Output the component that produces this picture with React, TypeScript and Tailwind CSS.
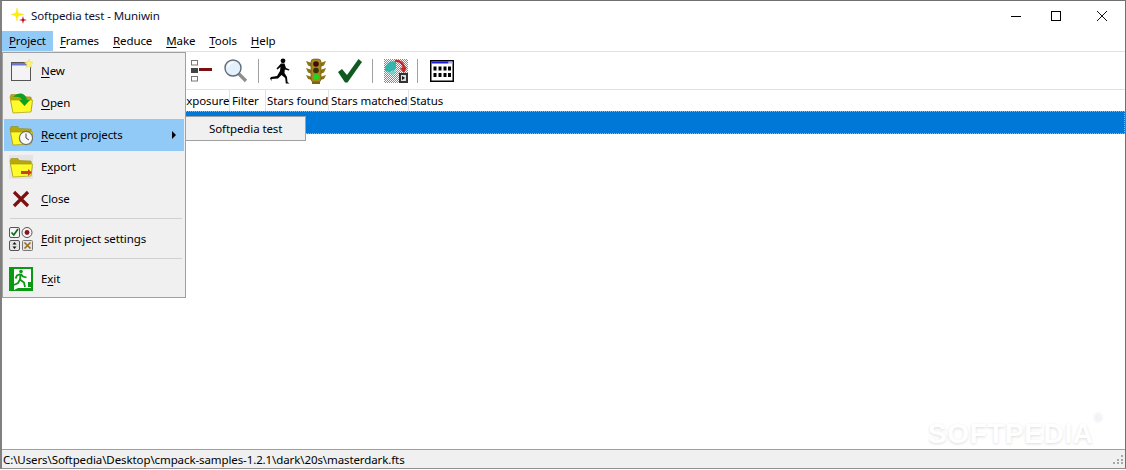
import React from 'react';

function AppIcon() {
  return (
    <svg width="18" height="18" viewBox="0 0 18 18" className="shrink-0">
      <path d="M7 1 L8.3 6 L14 7.5 L8.3 9 L7 14 L5.7 9 L1 7.5 L5.7 6 Z" fill="#ffee00" stroke="#f2e64a" strokeWidth="0.5" />
      <path d="M13 9 L13.8 12.2 L17 13 L13.8 13.8 L13 17 L12.2 13.8 L9 13 L12.2 12.2 Z" fill="#b8001c" />
    </svg>
  );
}

function NewIcon() {
  return (
    <svg width="24" height="24" viewBox="0 0 24 24">
      <rect x="2.5" y="3.5" width="19" height="18" fill="#f4f4f4" stroke="#555" />
      <rect x="3" y="4" width="18" height="2.5" fill="#6f78d8" />
      <path d="M20 0 L21.2 3 L24 3.4 L22 5.6 L22.8 8.8 L20 7.2 L17.2 8.8 L18 5.6 L15.6 3.4 L18.8 3 Z" fill="#fff27a" stroke="#e6d75a" strokeWidth="0.5" />
    </svg>
  );
}

function Folder({ children, bg }: { children?: React.ReactNode; bg?: string }) {
  return (
    <svg width="24" height="24" viewBox="0 0 24 24">
      {bg && <rect width="24" height="24" fill={bg} />}
      <path d="M1 6 L2 3.5 L9 3.5 L10 5.5 L22 6 L23 12 L22 20 L4 21 Z" fill="#b8a80c" stroke="#8d8410" strokeWidth="0.5" />
      <path d="M1.5 9 L23.5 9 L22 21 L4 22 Z" fill="#fffc2a" stroke="#a89c10" strokeWidth="0.7" />
      {children}
    </svg>
  );
}

function ClockOverlay() {
  return (
    <g>
      <circle cx="17" cy="15" r="6.6" fill="#f8f8f8" stroke="#707070" strokeWidth="1.2" />
      <path d="M17 10.5 L17 15 L20 17" fill="none" stroke="#444" strokeWidth="1" />
    </g>
  );
}

function XIcon() {
  return (
    <svg width="18" height="18" viewBox="0 0 18 18">
      <path d="M2 2 L16 16 M16 2 L2 16" stroke="#7c1010" strokeWidth="3.2" />
    </svg>
  );
}

function SettingsIcon() {
  return (
    <svg width="24" height="24" viewBox="0 0 24 24">
      <rect x="0.5" y="0.5" width="10" height="10" rx="1.5" fill="#f5f5f5" stroke="#555" />
      <path d="M2.5 5.5 L4.8 8 L9 2" fill="none" stroke="#0d6a1b" strokeWidth="1.7" />
      <circle cx="18" cy="5.5" r="5" fill="#f5f5f5" stroke="#555" />
      <circle cx="18" cy="5.5" r="2.4" fill="#8c1220" />
      <rect x="0.5" y="13.5" width="10" height="10" rx="1.5" fill="#e4e4e4" stroke="#555" />
      <path d="M5.5 15 L7.5 17.5 L3.5 17.5 Z M5.5 22 L7.5 19.5 L3.5 19.5 Z" fill="#111" />
      <rect x="13.5" y="13.5" width="10" height="10" rx="1" fill="#e4e4e4" stroke="#777" />
      <path d="M15.5 15.5 L21.5 21.5 M21.5 15.5 L15.5 21.5" stroke="#9c6a1c" strokeWidth="1.6" />
    </svg>
  );
}

function ExitIcon() {
  return (
    <svg width="24" height="24" viewBox="0 0 24 24">
      <rect width="24" height="24" fill="#0a9a12" />
      <path d="M5 2 L22 2 L22 21 L9 21 L5 23 Z" fill="#fff" />
      <circle cx="12" cy="4.5" r="1.8" fill="#0a9a12" />
      <path d="M11.5 7 L8 8.5 L6.5 11.5 M11.5 7 L14 9.5 L17.5 10.5 M11.5 7 L11 12.5 L15 15.5 L16 20 M11 12.5 L9 16 L5 18" fill="none" stroke="#0a9a12" strokeWidth="1.8" />
      <rect x="19" y="15" width="3" height="5" fill="#0a9a12" />
    </svg>
  );
}

function ListMinusIcon() {
  return (
    <svg width="24" height="24" viewBox="0 0 24 24">
      <rect x="1.5" y="1.5" width="6" height="4.5" fill="#fff" stroke="#777" />
      <rect x="1" y="9" width="7" height="5" fill="#444" />
      <rect x="1.5" y="17.5" width="6" height="4.5" fill="#fff" stroke="#777" />
      <rect x="9" y="9" width="13" height="3" fill="#7c1010" />
    </svg>
  );
}

function SearchIcon() {
  return (
    <svg width="26" height="26" viewBox="0 0 26 26">
      <path d="M15 15 L23 23" stroke="#8e8e8e" strokeWidth="3.4" />
      <circle cx="10" cy="10" r="8" fill="#e4f0fb" stroke="#5f6c7c" strokeWidth="1.4" />
      <path d="M5 9 A5.5 5.5 0 0 1 10 4.5" fill="none" stroke="#fff" strokeWidth="1.5" />
    </svg>
  );
}

function RunnerIcon() {
  return (
    <svg width="24" height="26" viewBox="0 0 24 26">
      <circle cx="14" cy="2.8" r="2.4" fill="#050505" />
      <path d="M12 5.5 L15.5 5.5 L17 10 L20.5 11.5 L20 12.5 L15.8 11.5 L15.5 15 L18 19 L18.5 24 L20.5 25.5 L16.8 25.5 L16.2 20 L12.5 17 L9 20.5 L2.5 21 L2.5 23 L1 20.5 L2 19 L8 18 L11 13 L11.5 9 L8.5 11.5 L7.5 10.5 Z" fill="#050505" />
    </svg>
  );
}

function TrafficIcon() {
  return (
    <svg width="24" height="26" viewBox="0 0 24 26">
      <path d="M2 3 L8 5 L8 9 L4 7.5 Z M22 3 L16 5 L16 9 L20 7.5 Z M2 10 L8 12 L8 16 L4 14.5 Z M22 10 L16 12 L16 16 L20 14.5 Z M2 17 L8 19 L8 22 L4 21 Z M22 17 L16 19 L16 22 L20 21 Z" fill="#8f7414" />
      <rect x="7" y="1" width="10" height="23" rx="3" fill="#a5861f" stroke="#5e4c10" strokeWidth="0.6" />
      <circle cx="12" cy="6" r="2.8" fill="#3e0d08" />
      <circle cx="12" cy="12.5" r="2.8" fill="#3e300a" />
      <circle cx="12" cy="19" r="3" fill="#1fd51f" />
      <rect x="8" y="24" width="8" height="2" fill="#7c6514" />
    </svg>
  );
}

function CheckIcon() {
  return (
    <svg width="24" height="24" viewBox="0 0 24 24">
      <path d="M0 13 L4 10 L9 16 L20.5 0 L24 3 L9.5 23.5 L7 23.5 Z" fill="#0f5a20" />
    </svg>
  );
}

function ConvertIcon() {
  return (
    <svg width="24" height="24" viewBox="0 0 24 24">
      <defs>
        <pattern id="checks" width="2" height="2" patternUnits="userSpaceOnUse">
          <rect width="2" height="2" fill="#fff" />
          <rect width="1" height="1" fill="#8a8a8a" />
          <rect x="1" y="1" width="1" height="1" fill="#8a8a8a" />
        </pattern>
      </defs>
      <rect width="24" height="24" fill="url(#checks)" />
      <path d="M1 12 A8 8 0 0 1 12 3 L12 10 L6 13 Z" fill="#35b5ad" />
      <path d="M3 14 L12 11 L10 16 Z" fill="#6fd6cf" />
      <path d="M11 2 C16 1 20 5 20 10" fill="none" stroke="#c22a2a" strokeWidth="2.4" />
      <path d="M16 9 L23 8 L20 14 Z" fill="#c22a2a" />
      <rect x="15" y="14" width="9" height="10" fill="#333" />
      <rect x="17" y="16" width="5" height="6" fill="#ddd" />
      <path d="M18 17 L21 19 L18 21 Z" fill="#111" />
    </svg>
  );
}

function CalendarIcon() {
  return (
    <svg width="24" height="22" viewBox="0 0 24 22">
      <rect x="0.75" y="0.75" width="22.5" height="20.5" fill="#fff" stroke="#000" strokeWidth="1.5" />
      <rect x="1.5" y="1.5" width="17" height="2" fill="#1a1ae0" />
      <rect x="18.5" y="1.5" width="4" height="2" fill="#a8a8f0" />
      <path d="M3.5 6.5h3v4h-3z M8.5 6.5h3v4h-3z M13.5 6.5h3v4h-3z M18 6.5h3v4h-3z M3.5 13h3v4h-3z M8.5 13h3v4h-3z M13.5 13h3v4h-3z M18 13h3v4h-3z" fill="#000" />
    </svg>
  );
}

// underlines the access key of a menu label
function Key({ k, rest, pre }: { k: string; rest?: string; pre?: string }) {
  return (
    <span>
      {pre}
      <span className="underline underline-offset-2">{k}</span>
      {rest}
    </span>
  );
}

function MenuRow({ icon, label, active, arrow }: { icon: React.ReactNode; label: React.ReactNode; active?: boolean; arrow?: boolean }) {
  return (
    <div className={`flex items-center h-8 ${active ? 'bg-[#91c9f7]' : ''}`}>
      <div className="w-[37px] pl-[5px] shrink-0">
        <div className="w-6 h-6 flex items-center justify-center">{icon}</div>
      </div>
      <div className="flex-1">{label}</div>
      {arrow && <div className="mr-[8px] w-0 h-0 border-y-[4px] border-y-transparent border-l-[4px] border-l-black" />}
    </div>
  );
}

function Sep() {
  return <div className="w-px h-6 bg-[#a0a0a0] mx-[9px]" />;
}

function ProjectMenu() {
  return (
    <div className="absolute left-[2px] top-[52px] w-[184px] h-[246px] bg-[#f0f0f0] border border-[#a0a0a0] px-px pt-[2px]">
      <MenuRow icon={<NewIcon />} label={<Key k="N" rest="ew" />} />
      <MenuRow icon={<Folder><path d="M4 6 C10 0 17 2 18 9 L21 9 L15.5 15 L10 9 L13 9 C12 6 8 5 4 6 Z" fill="#10a020" /></Folder>} label={<Key k="O" rest="pen" />} />
      <MenuRow icon={<Folder><ClockOverlay /></Folder>} label={<Key k="R" rest="ecent projects" />} active arrow />
      <MenuRow icon={<Folder bg="#e4e4e4"><path d="M12 16 L19 16 L19 14 L23 17.5 L19 21 L19 19 L12 19 Z" fill="#c8422a" /></Folder>} label={<Key pre="E" k="x" rest="port" />} />
      <MenuRow icon={<XIcon />} label={<Key k="C" rest="lose" />} />
      <div className="h-px bg-[#d0d0d0] ml-[6px] mr-[2px] mt-[3px] mb-[4px]" />
      <MenuRow icon={<SettingsIcon />} label={<Key k="E" rest="dit project settings" />} />
      <div className="h-px bg-[#d0d0d0] ml-[6px] mr-[2px] mt-[3px] mb-[4px]" />
      <MenuRow icon={<ExitIcon />} label={<Key pre="E" k="x" rest="it" />} />
    </div>
  );
}

const columns = [
  { name: 'Exposure', w: 'w-[52px]', pl: 'pl-[2px]' },
  { name: 'Filter', w: 'w-[36px]', pl: 'pl-[2px]' },
  { name: 'Stars found', w: 'w-[63px]', pl: 'pl-px' },
  { name: 'Stars matched', w: 'w-[80px]', pl: 'pl-[2px]' },
];

export default function App() {
  return (
    <div className="relative w-[1126px] h-[470px] overflow-hidden bg-white text-[11.5px] tracking-[-0.1px] leading-4 text-black font-['Noto_Sans','Open_Sans',sans-serif]">
      <div className="flex flex-col h-[469px] border-t border-t-[#707070] border-l-2 border-l-[#808080] border-r border-r-[#707070] border-b border-b-[#909090]">
        {/* title bar */}
        <div className="flex items-center h-[30px] pl-[8px] shrink-0">
          <AppIcon />
          <span className="ml-[3px] flex-1 text-[#101030]">Softpedia test - Muniwin</span>
          <div className="w-[10px] h-px bg-black mr-[30px]" />
          <div className="w-[10px] h-[10px] border border-black mr-[36px]" />
          <svg width="10" height="10" viewBox="0 0 10 10" className="mr-[18px]">
            <path d="M0 0 L10 10 M10 0 L0 10" stroke="#111" strokeWidth="1" />
          </svg>
        </div>

        {/* menu bar */}
        <div className="flex items-center h-[21px] border-b border-b-[#e2e2e2] shrink-0">
          <div className="bg-[#91c9f7] h-[20px] px-[7px] flex items-center"><Key k="P" rest="roject" /></div>
          <div className="flex gap-[14px] ml-[7px]">
            <Key k="F" rest="rames" />
            <Key k="R" rest="educe" />
            <Key k="M" rest="ake" />
            <Key k="T" rest="ools" />
            <Key k="H" rest="elp" />
          </div>
        </div>

        {/* toolbar */}
        <div className="flex items-center h-[38px] pl-[188px] shrink-0 border-b border-b-[#e2e2e2]">
          <ListMinusIcon />
          <div className="ml-[9px]"><SearchIcon /></div>
          <Sep />
          <div className="ml-[1px]"><RunnerIcon /></div>
          <div className="ml-[11px]"><TrafficIcon /></div>
          <div className="ml-[10px]"><CheckIcon /></div>
          <div className="ml-[1px]"><Sep /></div>
          <div className="ml-[2px]"><ConvertIcon /></div>
          <Sep />
          <div className="ml-[3px]"><CalendarIcon /></div>
        </div>

        {/* frame list */}
        <div className="flex-1 min-h-0 flex flex-col">
          <div className="flex items-center h-[21px] pl-[176px] shrink-0 whitespace-nowrap">
            {columns.map(c => (
              <div key={c.name} className={`${c.w} ${c.pl} h-full flex items-center pt-px border-r border-r-[#e2e2e2]`}>{c.name}</div>
            ))}
            <div className="pl-px pt-px">Status</div>
          </div>
          <div className="h-[23px] bg-[#0078d7] border border-dotted border-[#f0a060]" />
        </div>

        {/* status bar */}
        <div className="flex items-center h-[19px] bg-[#f0f0f0] border-t border-t-[#a0a0a0] pl-px shrink-0">
          <span className="flex-1 pt-px">C:\Users\Softpedia\Desktop\cmpack-samples-1.2.1\dark\20s\masterdark.fts</span>
          <svg width="10" height="10" viewBox="0 0 10 10" className="mr-[2px]">
            <path d="M8 1h2v2h-2z M4 5h2v2h-2z M8 5h2v2h-2z M0 8h2v2h-2z M4 8h2v2h-2z M8 8h2v2h-2z" fill="#a8a8a8" />
          </svg>
        </div>
      </div>

      <ProjectMenu />

      {/* recent projects submenu */}
      <div className="absolute left-[185px] top-[116px] w-[121px] h-[25px] bg-[#f0f0f0] border border-[#a0a0a0] flex items-center pl-[23px]">
        Softpedia test
      </div>

      {/* watermark */}
      <div className="absolute left-[928px] top-[416px] text-[28px] leading-9 font-bold tracking-[0.6px] text-white [text-shadow:0_1px_3px_#dcdcdc] font-['Liberation_Sans',sans-serif]">
        SOFTPEDIA
      </div>
      <div className="absolute left-[1094px] top-[412px] text-[10px] leading-3 tracking-normal text-white [text-shadow:0_0_2px_#c8c8c8]">®</div>
    </div>
  );
}
